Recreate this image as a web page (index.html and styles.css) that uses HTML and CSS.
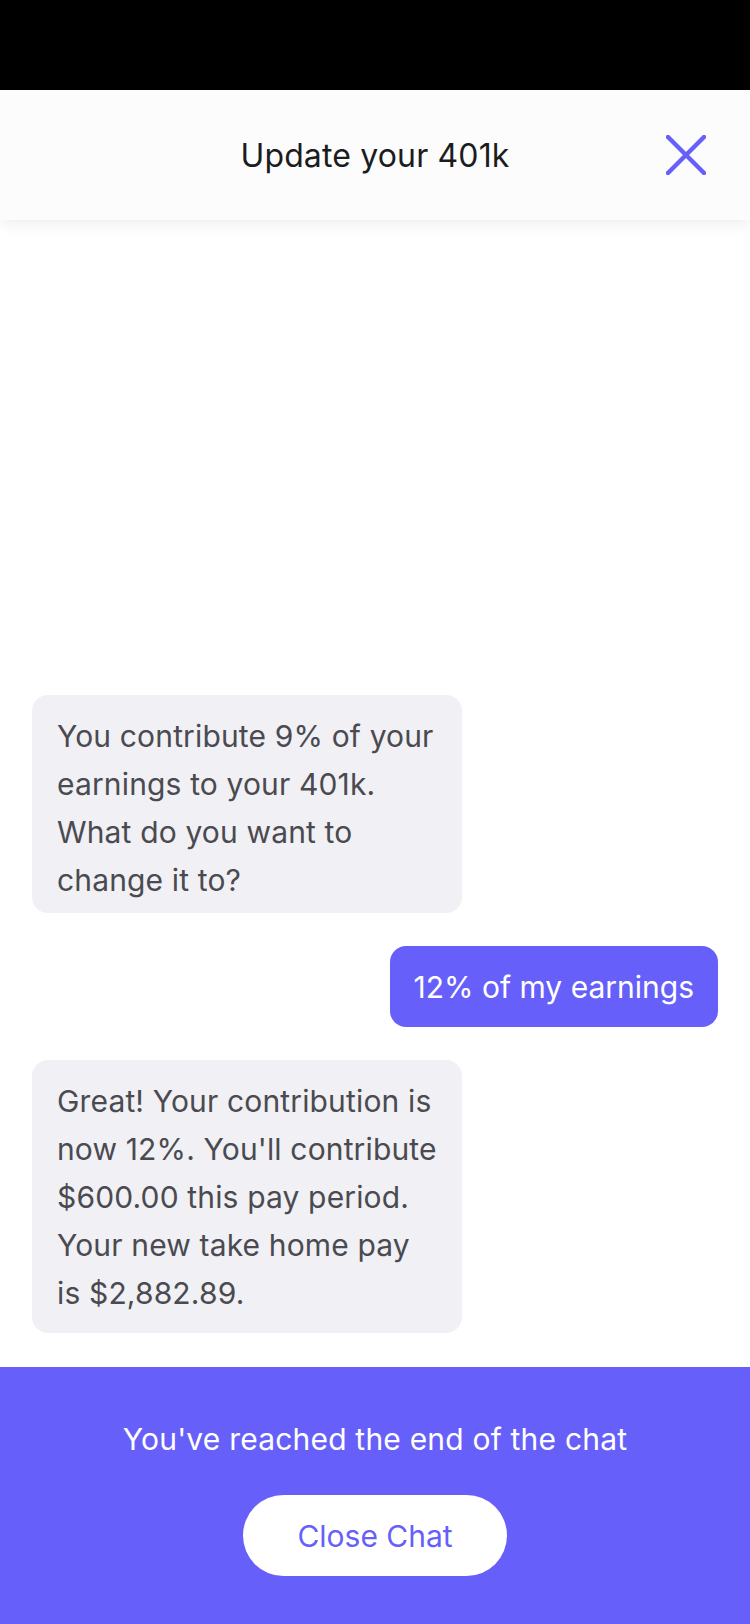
FILE: index.html
```html
<!DOCTYPE html>
<html lang="en">
<head>
<meta charset="utf-8">
<title>Update your 401k</title>
<link rel="stylesheet" href="styles.css">
</head>
<body>
<div class="screen">
  <div class="status-bar"></div>
  <header class="header">
    <h1 class="title">Update your 401k</h1>
    <button class="close-btn" aria-label="Close">
      <svg width="40" height="40" viewBox="0 0 40 40"><path d="M2 2 L38 38 M38 2 L2 38" stroke="#675ffa" stroke-width="4.5" stroke-linecap="round" fill="none"/></svg>
    </button>
  </header>
  <main class="chat">
    <div class="msg bot first">You contribute 9% of your earnings to your 401k. What do you want to change it to?</div>
    <div class="msg user">12% of my earnings</div>
    <div class="msg bot">Great! Your contribution is now 12%. You'll contribute $600.00 this pay period. Your new take home pay is $2,882.89.</div>
  </main>
  <footer class="footer">
    <p class="end-text">You've reached the end of the chat</p>
    <button class="close-chat">Close Chat</button>
  </footer>
</div>
</body>
</html>
```
FILE: styles.css
```css
* { box-sizing: border-box; }
html, body { margin: 0; padding: 0; background: #fff; }
body { font-family: Inter, "Noto Sans", sans-serif; }
.screen {
  width: 750px;
  height: 1624px;
  display: flex;
  flex-direction: column;
  overflow: hidden;
}
.status-bar { height: 90px; background: #000; flex: none; }
.header {
  flex: none;
  height: 130px;
  background: #fcfcfc;
  display: flex;
  align-items: center;
  justify-content: center;
  position: relative;
  box-shadow: 0 4px 14px rgba(0,0,0,0.07);
  z-index: 1;
}
.title {
  margin: 0;
  font-weight: 400;
  font-size: 32px;
  color: #1c1c1e;
  letter-spacing: 0.15px;
}
.close-btn {
  position: absolute;
  right: 44px;
  top: 45px;
  width: 40px;
  height: 40px;
  padding: 0;
  border: 0;
  background: none;
  display: block;
}
.close-btn svg { display: block; }
.chat {
  flex: 1;
  display: flex;
  flex-direction: column;
  justify-content: flex-end;
  align-items: flex-start;
  gap: 33px;
  padding: 0 32px 34px;
}
.msg {
  font-size: 30px;
  line-height: 48px;
  letter-spacing: 0.15px;
  border-radius: 16px;
  padding: 17px 25px 16px;
}
.msg.bot {
  width: 430px;
  background: #f0f0f5;
  color: #4a4a50;
}
.msg.bot.first { padding-bottom: 9px; }
.msg.user {
  align-self: flex-end;
  background: #675ffa;
  color: #fff;
  letter-spacing: 0;
  padding-left: 24px;
  padding-right: 24px;
}
.footer {
  flex: none;
  height: 257px;
  background: #675ffa;
  display: flex;
  flex-direction: column;
  align-items: center;
  padding-top: 50px;
}
.end-text {
  margin: 0;
  color: #fff;
  font-size: 30px;
  line-height: 44px;
  letter-spacing: 0.2px;
}
.close-chat {
  margin-top: 34px;
  width: 264px;
  height: 81px;
  border: 0;
  border-radius: 41px;
  background: #fff;
  color: #675ffa;
  font-family: Inter, "Noto Sans", sans-serif;
  font-size: 30px;
  padding: 0;
}
```
